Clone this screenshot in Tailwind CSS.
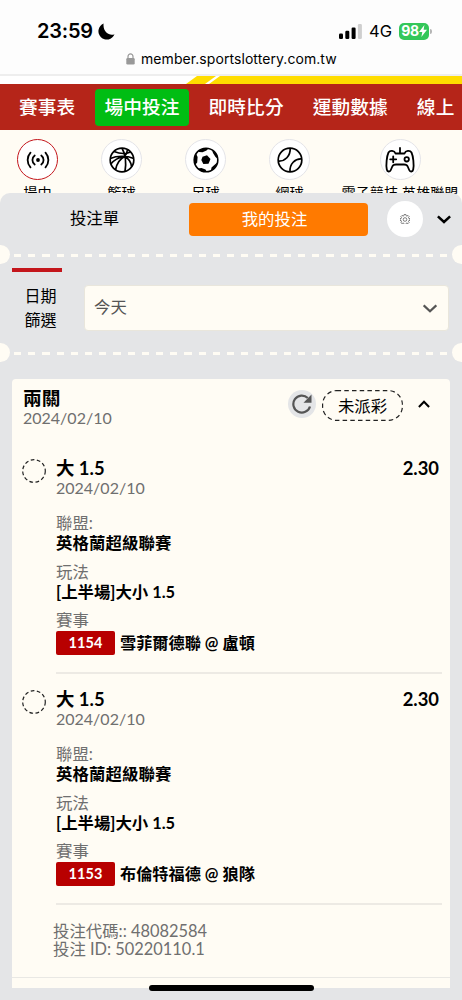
<!DOCTYPE html>
<html lang="zh-Hant">

<head>
  <meta charset="UTF-8" />
  <title>我的投注</title>
  <meta name="viewport" content="width=device-width, initial-scale=1.0" />
  <script src="https://cdn.jsdelivr.net/npm/@tailwindcss/browser@4"></script>
</head>

<body class="bg-[#e4e5e7] h-[1000px] overflow-hidden font-['Lato','Noto_Sans_CJK_TC',sans-serif] text-black">

  <!-- Status bar -->
  <div class="bg-[#fdfdfd] h-[76px] border-b-2 border-[#eeeeee] font-['Inter',sans-serif]">
    <div class="h-[46px] pt-[16px] pl-[37px] pr-[33px] flex items-center justify-between">
      <div class="flex items-center gap-[5px]">
        <span class="text-[20px] leading-[30px] font-semibold tracking-[-0.2px]">23:59</span>
        <svg class="w-[17px] h-[17px]" viewBox="0 0 17 17"><path d="M5.600.6A8.300 8.300 0 1 0 16.500 11.200C11.500 13.500 4.500 8.500 5.600.6Z" /></svg>
      </div>
      <div class="flex items-center">
        <svg class="w-[23px] h-[15px] mr-[7px]" viewBox="0 0 23 15">
          <rect x="0" y="9.5" width="4" height="5.5" rx="1.2" />
          <rect x="6.3" y="6.7" width="4" height="8.3" rx="1.2" />
          <rect x="12.6" y="3.5" width="4" height="11.5" rx="1.2" />
          <rect x="18.9" y="0" width="4" height="15" rx="1.2" fill="#cfcfcf" />
        </svg>
        <span class="text-[16.5px] leading-[30px] mr-[7px]">4G</span>
        <div class="bg-[#34c759] rounded-[5px] w-[30px] h-[17px] flex items-center justify-center text-white text-[14px] leading-none font-bold">
          <span class="tracking-[-0.3px]">98</span>
          <svg class="w-[8px] h-[12px]" viewBox="0 0 8 12"><path d="M5.4 0 0 7h3.3L2.4 12 8 4.8H4.6Z" fill="#fff" /></svg>
        </div>
        <span class="w-[2px] h-[5px] ml-px -mr-[3px] bg-[#b5b5b5] rounded-r-full"></span>
      </div>
    </div>
    <div class="flex items-center pl-[126px] h-[25px]">
      <svg class="w-[9px] h-[12px] mr-[6px]" viewBox="0 0 9 12">
        <path d="M2 6V3.4a2.5 2.5 0 0 1 5 0V6" fill="none" stroke="#999" stroke-width="1.2" />
        <rect x=".3" y="5" width="8.4" height="6.6" rx="1.3" fill="#999" />
      </svg>
      <span class="text-[14px] leading-[20px] tracking-[0.07px]">member.sportslottery.com.tw</span>
    </div>
  </div>

  <!-- Banner strip -->
  <svg class="block w-full h-[8px] bg-white" viewBox="0 0 462 8">
    <path d="M197 0h19l-11 8h-19ZM220 0h242v8H209Z" fill="#ffdd00" />
  </svg>

  <!-- Main nav -->
  <nav class="bg-[#b52519] h-[46px] overflow-hidden flex items-center gap-[10px] pl-[9.5px] text-white text-[18.7px] tracking-[0.1px] font-medium whitespace-nowrap">
    <a class="px-[9.5px]">賽事表</a>
    <a class="px-[9.5px] h-[37px] leading-[36px] bg-[#00bd13] rounded-[4px]">場中投注</a>
    <a class="px-[9.5px]">即時比分</a>
    <a class="px-[9.5px]">運動數據</a>
    <a class="px-[9.5px]">線上</a>
  </nav>

  <!-- Sports -->
  <div class="bg-[#fffcf4] h-[78px] overflow-hidden flex pt-[9px] -ml-[4.5px] text-[14.2px] leading-[20px] whitespace-nowrap">
    <div class="w-[84px] shrink-0 flex flex-col items-center gap-[3px]">
      <div class="size-[41px] shrink-0 rounded-full bg-white border border-[#c4161c] flex items-center justify-center">
        <svg class="size-[24px]" viewBox="0 0 24 24" fill="none" stroke="#000" stroke-width="1.8" stroke-linecap="round">
          <circle cx="12" cy="12" r="1.9" fill="#000" stroke="none" />
          <path d="M8.700 7.500a5.600 5.600 0 0 0 0 9M15.300 7.500a5.600 5.600 0 0 1 0 9M4.500 4.600a11 11 0 0 0 0 14.800M19.500 4.600a11 11 0 0 1 0 14.800" />
        </svg>
      </div>
      <span>場中</span>
    </div>
    <div class="w-[84px] shrink-0 flex flex-col items-center gap-[3px]">
      <div class="size-[41px] shrink-0 rounded-full bg-white border border-[#e4e4e8] flex items-center justify-center">
        <svg class="size-[26px]" viewBox="0 0 26 26" fill="none" stroke="#000" stroke-width="1.7">
          <circle cx="13" cy="13" r="11.8" />
          <path d="M13 1.200C16.500 7 17.300 16 16 24.500M5 4.500C10 6.500 17 7 21.500 5M1.300 11.500C8 8.500 18 8.500 24.800 11.500M1.800 17C5 13 10 10.500 15.500 9.500M6.500 23C7.500 17.500 10.500 12 15.800 9.500 19.500 11.500 22 15 22.500 19.500M15.500 9.500C17 8 18.200 5.500 18.500 2.500" />
        </svg>
      </div>
      <span>籃球</span>
    </div>
    <div class="w-[84px] shrink-0 flex flex-col items-center gap-[3px]">
      <div class="size-[41px] shrink-0 rounded-full bg-white border border-[#e4e4e8] flex items-center justify-center">
        <svg class="size-[26px]" viewBox="0 0 26 26">
          <circle cx="13" cy="13" r="11.800" fill="none" stroke="#000" stroke-width="1.600" />
          <path d="M9.500 9.800 14 8.300 17.500 12 15.500 16.800 10.300 17 8.300 13Z" />
          <path d="M5.500 3.500 10 1.500 15.500 1.500 13.500 3.500 9.500 5.200 6 5ZM19 2.700 24 8 25 12 22.500 10 20 6ZM25 15 21 22 18 23.500 18.500 20.500 22.500 17ZM14 25 8 24.300 4.500 21.500 8.500 21 12.500 22.500ZM2 18 .9 12 3 6.500 4.600 10 4.200 15.500Z" />
        </svg>
      </div>
      <span>足球</span>
    </div>
    <div class="w-[84px] shrink-0 flex flex-col items-center gap-[3px]">
      <div class="size-[41px] shrink-0 rounded-full bg-white border border-[#e4e4e8] flex items-center justify-center">
        <svg class="size-[26px]" viewBox="0 0 26 26" fill="none" stroke="#000" stroke-width="1.700">
          <circle cx="13" cy="13" r="11.800" />
          <path d="M1.300 14C8 14.500 13.500 9 13.200 1.200M24.700 12C18 11.500 12.500 17 13 24.800" />
        </svg>
      </div>
      <span>網球</span>
    </div>
    <div class="w-[137px] shrink-0 flex flex-col items-center gap-[3px]">
      <div class="size-[41px] shrink-0 rounded-full bg-white border border-[#e4e4e8] flex items-center justify-center">
        <svg class="w-[30px] h-[26px]" viewBox="0 0 30 26" fill="none" stroke="#000" stroke-width="1.800" stroke-linejoin="round" stroke-linecap="round">
          <path d="M15 1v5.500M10.500 6.500h9C20.500 3.500 25 3 26.500 5.500 28.200 9 29.200 18 28.200 22.500 27.700 25 25 25.200 24.200 23L22.700 19.500C22 17.800 20.500 17.500 19 17.500H11C9.500 17.500 8 17.800 7.300 19.500L5.800 23C5 25.200 2.300 25 1.800 22.500.8 18 1.800 9 3.500 5.500 5 3 9.500 3.500 10.500 6.500Z" />
          <path d="M8.200 9.300v6M5.200 12.300h6" />
          <circle cx="21.700" cy="12.300" r="2.200" />
        </svg>
      </div>
      <span>電子競技 英雄聯盟</span>
    </div>
  </div>

  <!-- Bet slip panel -->
  <main class="relative -mt-[15px] bg-[#e4e5e7] rounded-t-[10px] overflow-hidden h-[807px]">

    <div class="h-[51px] flex items-center text-[16.400px]">
      <div class="w-[189px] text-center">投注單</div>
      <div class="w-[179px] h-[33px] leading-[32px] mt-px bg-[#ff7a00] text-white text-center pr-[8px] rounded-[4px]">我的投注</div>
      <div class="ml-[19px] size-[36px] mt-px rounded-full bg-white flex items-center justify-center">
        <svg class="size-[10px]" viewBox="0 0 20 20" fill="none" stroke="#555" stroke-width="1.500" stroke-linejoin="round">
          <path d="M8.300 1h3.400l.5 2.500 1.700.7 2.100-1.400 2.300 2.300-1.400 2.100.7 1.700 2.400.4v3.400l-2.400.5-.7 1.700 1.400 2.100-2.300 2.300-2.100-1.400-1.700.7-.5 2.400H8.300l-.5-2.400-1.700-.7L4 19.300 1.700 17l1.400-2.100-.7-1.700L0 12.700V9.300l2.400-.4.7-1.700L1.700 5.100 4 2.800l2.100 1.400 1.700-.7Z" />
          <circle cx="10" cy="11" r="3.600" />
        </svg>
      </div>
      <svg class="ml-[14px] mt-[2px] w-[14px] h-[9px]" viewBox="0 0 14 9" fill="none" stroke="#000" stroke-width="2.500"><path d="M.9 1.300 7 7l6.100-5.700" /></svg>
    </div>

    <!-- Perforated divider -->
    <div class="h-[20px] flex items-center justify-between">
      <span class="w-[10px] h-[19px] bg-[#fffcf4] rounded-r-full"></span>
      <span class="w-[435px] h-[3px] mt-[3px] ml-[4px] mr-auto bg-[repeating-linear-gradient(90deg,#fffcf4_0_7.200px,transparent_7.200px_14.200px)]"></span>
      <span class="w-[10px] h-[19px] bg-[#fffcf4] rounded-l-full"></span>
    </div>

    <div class="ml-[12px] mt-[4px] w-[50px] h-[4px] bg-[#c4161c]"></div>

    <!-- Date filter -->
    <div class="h-[45px] mt-[13px] flex items-center">
      <div class="w-[84px] pr-[3px] text-center text-[16px] leading-[24px]"><p>日期</p><p>篩選</p></div>
      <div class="w-[365px] h-[46px] px-[9px] pr-[11px] bg-[#fffcf4] rounded-[4px] border border-[#e9e6dc] flex items-center justify-between text-[16.400px] text-[#555]">
        <span>今天</span>
        <svg class="w-[14px] h-[9px] mt-[2px]" viewBox="0 0 14 9" fill="none" stroke="#555" stroke-width="2.200"><path d="m.7 1.300 6.300 5.900 6.300-5.900" /></svg>
      </div>
    </div>

    <div class="h-[20px] mt-[12px] flex items-center justify-between">
      <span class="w-[10px] h-[19px] bg-[#fffcf4] rounded-r-full"></span>
      <span class="w-[435px] h-[3px] mt-[3px] ml-[4px] mr-auto bg-[repeating-linear-gradient(90deg,#fffcf4_0_7.200px,transparent_7.200px_14.200px)]"></span>
      <span class="w-[10px] h-[19px] bg-[#fffcf4] rounded-l-full"></span>
    </div>

    <!-- Ticket -->
    <section class="mx-[12px] mt-[17px] h-[609px] bg-[#fffcf4] rounded-t-[4px] text-[16.400px] leading-[20px]">
      <div class="h-[73px] pt-[9px] pl-[11px] pr-[20px] flex">
        <div>
          <h2 class="text-[18.700px] font-bold">兩關</h2>
          <p class="text-[16px] text-[#6f6f6f]">2024/02/10</p>
        </div>
        <div class="ml-auto h-[34px] flex items-center">
          <div class="size-[28px] -mt-[2px] rounded-full bg-[#e4e5e7] flex items-center justify-center">
            <svg class="size-[20px]" viewBox="0 0 20 20"><path d="M18 12.500A8.500 8.500 0 1 1 15.800 4" fill="none" stroke="#555" stroke-width="2.200" /><path d="M19.500.5v8.300h-8Z" fill="#555" /></svg>
          </div>
          <div class="relative ml-[6px] w-[81px] h-[31px] leading-[31px] text-center">
            <svg class="absolute inset-0" width="81" height="31" fill="none" stroke="#222" stroke-width="1.200" stroke-dasharray="4.500 3.200"><rect x=".6" y=".6" width="79.800" height="29.800" rx="14" /></svg>
            未派彩
          </div>
          <svg class="ml-[15px] -mt-[2px] w-[12px] h-[8px]" viewBox="0 0 12 8" fill="none" stroke="#000" stroke-width="2"><path d="m.9 7 5.100-5.300L11.100 7" /></svg>
        </div>
      </div>

      <div class="h-[231px] pt-[6px] pl-[10px] pr-[8px] flex">
        <svg class="size-[24px] mt-[1px] mr-[10px] shrink-0" viewBox="0 0 24 24" fill="none" stroke="#222" stroke-width="1.200" stroke-dasharray="3.700 2.500"><circle cx="12" cy="12" r="11.300" /></svg>
        <div class="flex-1 h-[216px] border-b-2 border-[#edeae4]">
          <div class="flex justify-between pr-[3px] text-[18.400px] font-bold"><span>大 1.5</span><span>2.30</span></div>
          <p class="text-[16px] text-[#6f6f6f]">2024/02/10</p>
          <p class="mt-[15px] text-[#6f6f6f]">聯盟:</p>
          <p class="font-bold tracking-[0.1px]">英格蘭超級聯賽</p>
          <p class="mt-[9px] text-[#6f6f6f]">玩法</p>
          <p class="font-bold">[上半場]大小 1.5</p>
          <p class="mt-[8px] text-[#6f6f6f]">賽事</p>
          <div class="mt-px flex items-center gap-[5px] font-bold"><span class="w-[59px] h-[24px] leading-[24px] bg-[#b80000] text-white text-[14.500px] text-center tracking-[0.100px] rounded-[2px]">1154</span><span class="text-[16.200px]">雪菲爾德聯 @ 盧頓</span></div>
        </div>
      </div>

      <div class="h-[231px] pt-[6px] pl-[10px] pr-[8px] flex">
        <svg class="size-[24px] mt-[1px] mr-[10px] shrink-0" viewBox="0 0 24 24" fill="none" stroke="#222" stroke-width="1.200" stroke-dasharray="3.700 2.500"><circle cx="12" cy="12" r="11.300" /></svg>
        <div class="flex-1 h-[216px] border-b-2 border-[#edeae4]">
          <div class="flex justify-between pr-[3px] text-[18.400px] font-bold"><span>大 1.5</span><span>2.30</span></div>
          <p class="text-[16px] text-[#6f6f6f]">2024/02/10</p>
          <p class="mt-[15px] text-[#6f6f6f]">聯盟:</p>
          <p class="font-bold tracking-[0.1px]">英格蘭超級聯賽</p>
          <p class="mt-[9px] text-[#6f6f6f]">玩法</p>
          <p class="font-bold">[上半場]大小 1.5</p>
          <p class="mt-[8px] text-[#6f6f6f]">賽事</p>
          <div class="mt-px flex items-center gap-[5px] font-bold"><span class="w-[59px] h-[24px] leading-[24px] bg-[#b80000] text-white text-[14.500px] text-center tracking-[0.100px] rounded-[2px]">1153</span><span class="text-[16.200px]">布倫特福德 @ 狼隊</span></div>
        </div>
      </div>

      <div class="h-[64px] pt-[8px] pl-[41px] leading-[18px] text-[#6f6f6f] border-b border-[#e9e8e4]">
        <p>投注代碼:: 48082584</p>
        <p>投注 ID: 50220110.1</p>
      </div>
    </section>

    <!-- Home indicator -->
    <div class="absolute left-[149px] bottom-[9px] w-[165px] h-[6px] bg-black rounded-full"></div>
  </main>
</body>

</html>
